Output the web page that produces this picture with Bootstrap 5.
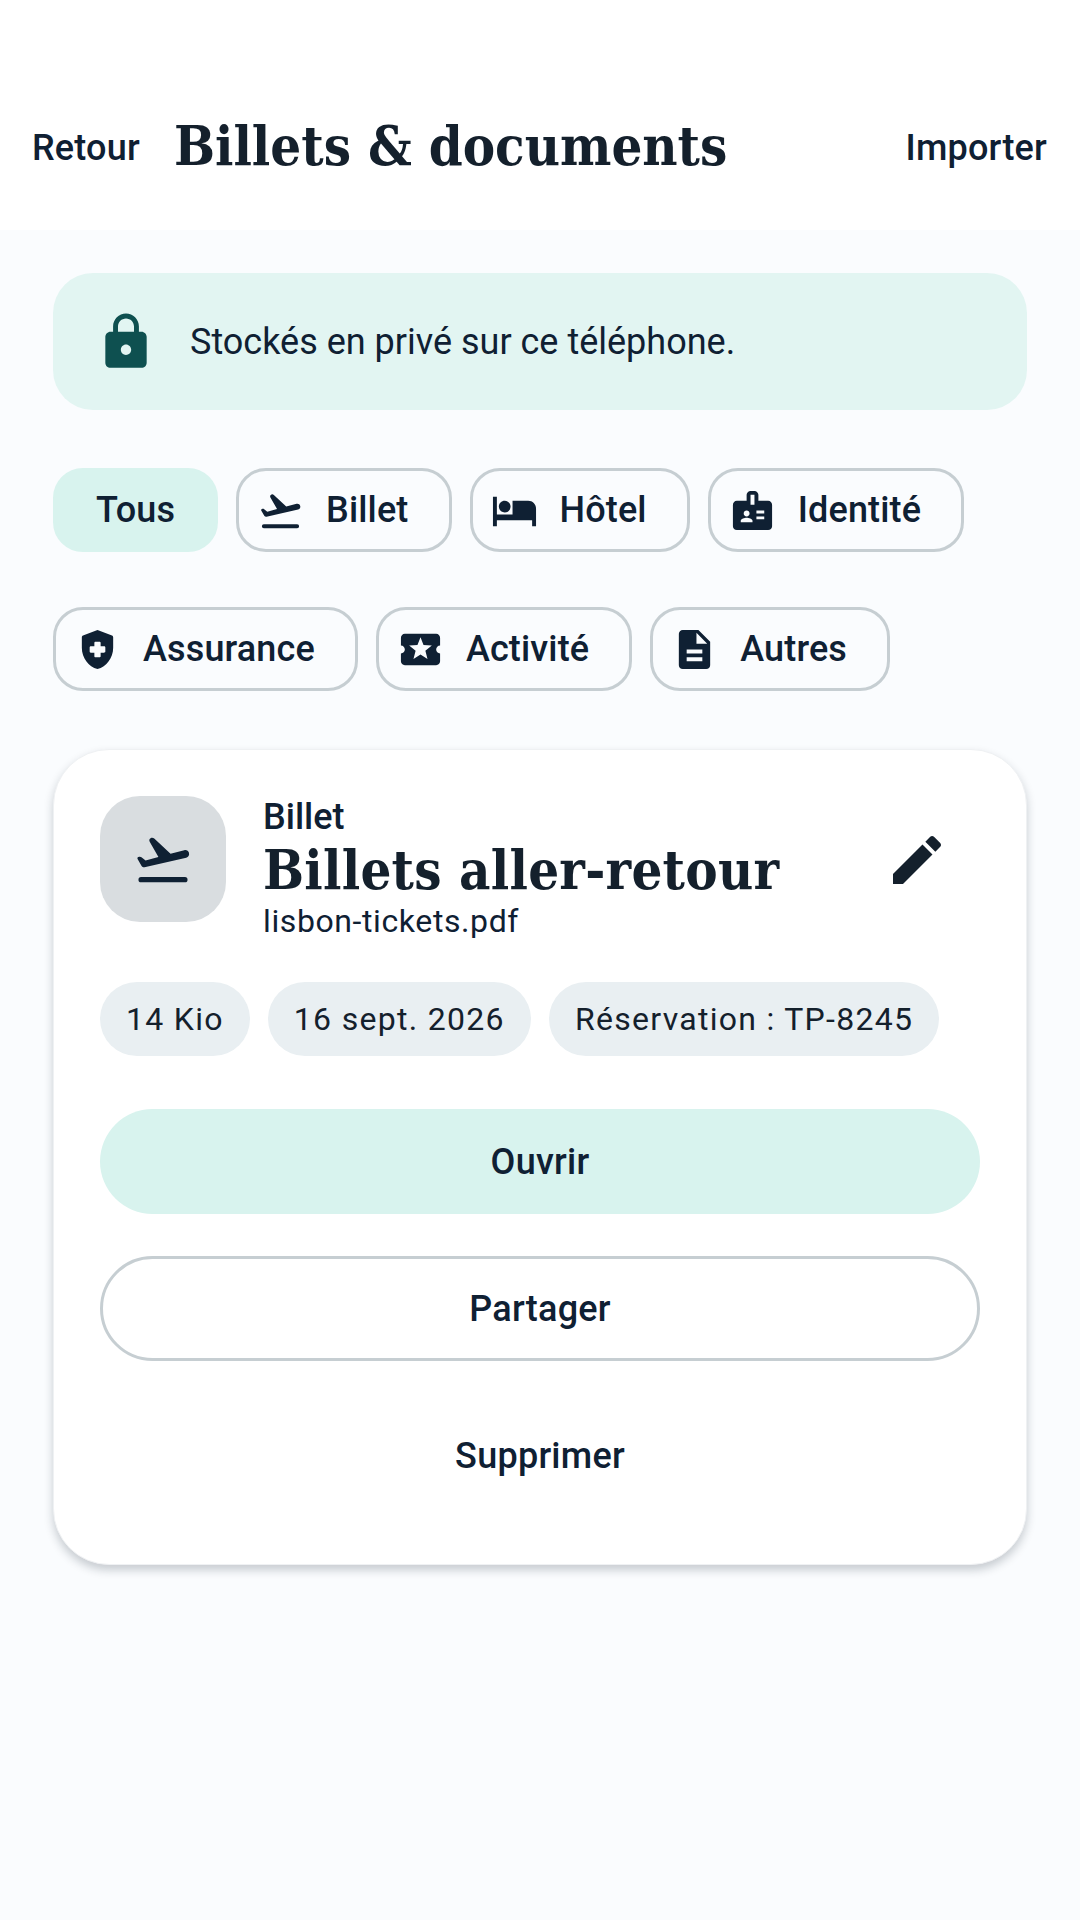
<!DOCTYPE html>
<html lang="fr">
<head>
  <meta charset="UTF-8" />
  <meta name="viewport" content="width=device-width, initial-scale=1" />
  <title>Billets &amp; documents</title>
  <link href="https://cdn.jsdelivr.net/npm/bootstrap@5.3.0/dist/css/bootstrap.min.css" rel="stylesheet" />
  <style>
    body {
      background-color: #fafcfe;
      color: #0f2033;
      font-family: Roboto, sans-serif;
      min-height: 1920px;
    }
    .serif-title {
      font-family: "DejaVu Serif Condensed", "DejaVu Serif", serif;
      font-stretch: condensed;
      font-weight: 700;
      color: #14202c;
      margin: 0;
    }
    .top-bar {
      background: #fff;
      height: 230px;
      padding: 113px 33px 0 32px;
    }
    .top-bar .serif-title {
      font-size: 54px;
      line-height: 70px;
      margin: -2px 0 0 34px;
    }
    .top-link {
      font-size: 36px;
      font-weight: 500;
      line-height: 70px;
      letter-spacing: .2px;
    }
    .page-body {
      padding: 43px 53px 0;
    }
    .privacy-note {
      background: #e2f5f2;
      border-radius: 40px;
      height: 137px;
      padding-left: 42px;
      gap: 33px;
      font-size: 36px;
    }
    .privacy-note svg {
      width: 62px;
      height: 62px;
      fill: #0e5050;
    }
    .chip-wrap {
      margin-top: 58px;
      column-gap: 18px;
      row-gap: 55px;
    }
    .filter-chip {
      height: 84px;
      border: 3px solid #c6ced2;
      border-radius: 30px;
      padding: 0 40px 0 18px;
      gap: 22px;
      font-size: 36px;
      font-weight: 500;
      letter-spacing: .15px;
      color: #0f2033;
      background: transparent;
    }
    .filter-chip svg {
      width: 47px;
      height: 47px;
      fill: #0f2033;
    }
    .filter-chip.is-active {
      background: #d8f3ee;
      border-color: #d8f3ee;
      padding: 0 40px;
    }
    .doc-card {
      margin-top: 58px;
      background: #fff;
      border: 1px solid #eff1f3;
      border-radius: 56px;
      height: 816px;
      padding: 46px;
      box-shadow: 0 5px 10px rgba(20, 32, 44, .22);
    }
    .doc-head {
      height: 186px;
    }
    .doc-thumb {
      width: 126px;
      height: 126px;
      background: #d9dde0;
      border-radius: 40px;
      flex-shrink: 0;
    }
    .doc-thumb svg {
      width: 62px;
      height: 62px;
      fill: #0f2033;
    }
    .doc-text {
      margin-left: 37px;
    }
    .doc-kind {
      font-size: 36px;
      font-weight: 500;
      line-height: 42px;
    }
    .doc-text .serif-title {
      font-size: 54px;
      line-height: 64px;
      letter-spacing: .25px;
    }
    .doc-file {
      font-size: 32px;
      line-height: 39px;
      letter-spacing: .6px;
    }
    .edit-icon {
      width: 64px;
      height: 64px;
      fill: #14202c;
      margin: 32px 31px 0 0;
    }
    .meta-wrap {
      gap: 18px;
    }
    .meta-chip {
      height: 74px;
      line-height: 74px;
      padding: 0 26px;
      border-radius: 37px;
      background: #e9eff2;
      font-size: 32px;
      letter-spacing: 1.3px;
      color: #14202c;
    }
    .act-btn {
      display: block;
      width: 100%;
      height: 105px;
      border-radius: 53px;
      font-size: 36px;
      font-weight: 500;
      letter-spacing: .25px;
      color: #0f2033;
      padding: 0;
    }
    .act-btn:hover { color: #0f2033; }
    .act-open {
      margin-top: 53px;
      background: #d8f3ee;
      border: 0;
    }
    .act-share {
      margin-top: 42px;
      background: #fff;
      border: 3px solid #c6ced2;
    }
    .act-remove {
      margin-top: 42px;
      background: transparent;
      border: 0;
    }
  </style>
</head>
<body>

  <div class="top-bar d-flex align-items-start justify-content-between">
    <div class="d-flex align-items-start">
      <span class="top-link">Retour</span>
      <h1 class="serif-title">Billets &amp; documents</h1>
    </div>
    <span class="top-link">Importer</span>
  </div>

  <div class="page-body">
    <div class="privacy-note d-flex align-items-center">
      <svg viewBox="0 0 24 24"><path d="M18 8h-1V6c0-2.76-2.24-5-5-5S7 3.24 7 6v2H6c-1.1 0-2 .9-2 2v10c0 1.1.9 2 2 2h12c1.1 0 2-.9 2-2V10c0-1.1-.9-2-2-2zm-6 9c-1.1 0-2-.9-2-2s.9-2 2-2 2 .9 2 2-.9 2-2 2zm3.1-9H8.9V6c0-1.71 1.39-3.1 3.1-3.1 1.71 0 3.1 1.39 3.1 3.1v2z"/></svg>
      <span>Stockés en privé sur ce téléphone.</span>
    </div>

    <div class="chip-wrap d-flex flex-wrap">
      <div class="filter-chip is-active d-flex align-items-center">Tous</div>
      <div class="filter-chip d-flex align-items-center">
        <svg viewBox="0 0 24 24"><path d="M3.500 19h17a1 1 0 0 1 0 2h-17a1 1 0 0 1 0-2zM22.070 9.640c-.21-.8-1.040-1.280-1.840-1.060L14.920 10 8.600 4.100c-.3-.3-.75-.4-1.100-.3-.7.2-1 .95-.65 1.550L10.230 11.250l-4.970 1.330-1.600-1.250c-.25-.2-.55-.25-.85-.17l-.35.1c-.3.1-.45.45-.3.75l1.550 2.700c.25.4.7.6 1.150.5L21 11.490c.81-.23 1.280-1.050 1.070-1.850z"/></svg>
        Billet
      </div>
      <div class="filter-chip d-flex align-items-center">
        <svg viewBox="0 0 24 24"><path d="M7 13c1.660 0 3-1.340 3-3S8.660 7 7 7s-3 1.340-3 3 1.340 3 3 3zm12-6h-8v7H3V5H1v15h2v-3h18v3h2v-9c0-2.210-1.790-4-4-4z"/></svg>
        Hôtel
      </div>
      <div class="filter-chip d-flex align-items-center">
        <svg viewBox="0 0 24 24"><path d="M20 7h-5V4c0-1.100-.9-2-2-2h-2c-1.100 0-2 .9-2 2v3H4c-1.100 0-2 .9-2 2v11c0 1.100.9 2 2 2h16c1.100 0 2-.9 2-2V9c0-1.100-.9-2-2-2zM9 12c.83 0 1.500.67 1.500 1.500S9.830 15 9 15s-1.500-.67-1.500-1.500S8.170 12 9 12zm3 6H6v-.75c0-1 2-1.500 3-1.500s3 .5 3 1.500V18zm1-9h-2V4h2v5zm5 7.500h-4V15h4v1.500zm0-3h-4V12h4v1.500z"/></svg>
        Identité
      </div>
      <div class="filter-chip d-flex align-items-center">
        <svg viewBox="0 0 24 24"><path fill-rule="evenodd" d="M12 2 4.600 4.800c-.4.15-.6.5-.6.9v5.400c0 5.050 3.410 9.760 8 10.900 4.590-1.140 8-5.850 8-10.900V5.700c0-.4-.2-.75-.6-.9L12 2zM11 8h2c.4 0 .6.3.6.6v1.800h1.800c.3 0 .6.2.6.6v2c0 .4-.3.6-.6.6h-1.800v1.800c0 .3-.2.6-.6.6h-2c-.4 0-.6-.3-.6-.6v-1.800H8.600c-.3 0-.6-.2-.6-.6v-2c0-.4.3-.6.6-.6h1.800V8.600c0-.3.2-.6.6-.6z"/></svg>
        Assurance
      </div>
      <div class="filter-chip d-flex align-items-center">
        <svg viewBox="0 0 24 24"><path d="M20 12c0-1.100.9-2 2-2V6c0-1.100-.9-2-2-2H4c-1.100 0-1.990.9-1.990 2v4c1.100 0 1.990.9 1.990 2s-.89 2-2 2v4c0 1.100.9 2 2 2h16c1.100 0 2-.9 2-2v-4c-1.100 0-2-.9-2-2zm-4.420 4.800L12 14.500l-3.580 2.300 1.080-4.120-3.290-2.690 4.240-.25L12 5.800l1.540 3.950 4.240.25-3.290 2.690 1.090 4.110z"/></svg>
        Activité
      </div>
      <div class="filter-chip d-flex align-items-center">
        <svg viewBox="0 0 24 24"><path d="M14 2H6c-1.100 0-1.990.9-1.990 2L4 20c0 1.100.89 2 1.990 2H18c1.100 0 2-.9 2-2V8l-6-6zm2 16H8v-2h8v2zm0-4H8v-2h8v2zm-3-5V3.500L18.500 9H13z"/></svg>
        Autres
      </div>
    </div>

    <div class="doc-card">
      <div class="doc-head d-flex justify-content-between align-items-start">
        <div class="d-flex align-items-start">
          <div class="doc-thumb d-flex align-items-center justify-content-center">
            <svg viewBox="0 0 24 24"><path d="M3.500 19h17a1 1 0 0 1 0 2h-17a1 1 0 0 1 0-2zM22.070 9.640c-.21-.8-1.040-1.280-1.840-1.060L14.920 10 8.600 4.100c-.3-.3-.75-.4-1.100-.3-.7.2-1 .95-.65 1.550L10.230 11.250l-4.970 1.330-1.600-1.250c-.25-.2-.55-.25-.85-.17l-.35.1c-.3.1-.45.45-.3.75l1.550 2.700c.25.4.7.6 1.150.5L21 11.490c.81-.23 1.280-1.050 1.070-1.850z"/></svg>
          </div>
          <div class="doc-text">
            <div class="doc-kind">Billet</div>
            <h2 class="serif-title">Billets aller-retour</h2>
            <div class="doc-file">lisbon-tickets.pdf</div>
          </div>
        </div>
        <svg class="edit-icon" viewBox="0 0 24 24"><path d="M3 17.250V21h3.750L17.810 9.940l-3.750-3.750L3 17.250zM20.710 7.040c.39-.39.39-1.020 0-1.410l-2.340-2.340c-.39-.39-1.020-.39-1.410 0l-1.830 1.830 3.750 3.750 1.830-1.830z"/></svg>
      </div>

      <div class="meta-wrap d-flex">
        <span class="meta-chip">14 Kio</span>
        <span class="meta-chip">16 sept. 2026</span>
        <span class="meta-chip">Réservation : TP-8245</span>
      </div>

      <button class="btn act-btn act-open">Ouvrir</button>
      <button class="btn act-btn act-share">Partager</button>
      <button class="btn act-btn act-remove">Supprimer</button>
    </div>
  </div>

</body>
</html>
